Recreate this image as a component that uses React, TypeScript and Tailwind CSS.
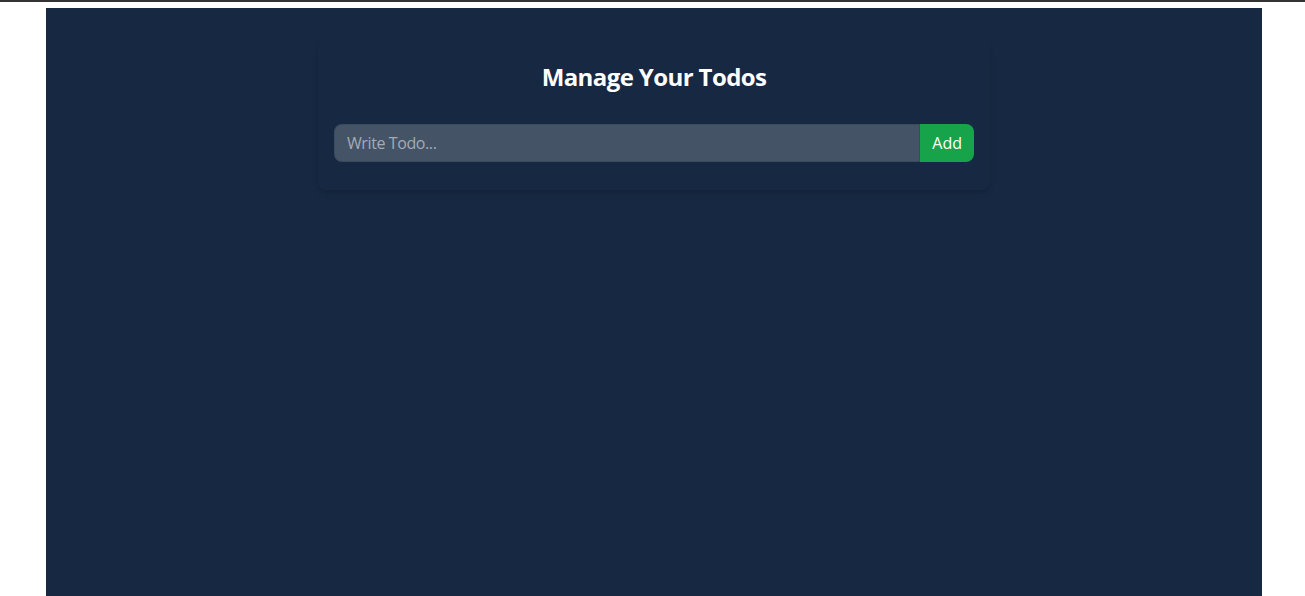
import React from "react";

export default function App() {
  return (
    <div className="min-h-screen bg-white" style={{ fontFamily: '"Open Sans", "Noto Sans", sans-serif' }}>
      <div className="h-[2px] bg-[#333333]" />
      <div className="pt-[6px] pl-[46px]">
        <div className="w-[1216px] min-h-[588px] bg-[#172842] py-8">
          <div className="w-full max-w-2xl mx-auto shadow-md rounded-lg px-4 py-3 text-white">
            <h1 className="text-2xl font-bold text-center mb-8 mt-2 pt-px leading-[31px] tracking-tight">Manage Your Todos</h1>
            <div className="mb-4">
              <form className="flex" onSubmit={(e) => e.preventDefault()}>
                <input
                  type="text"
                  placeholder="Write Todo..."
                  className="w-full border border-black/10 rounded-l-lg px-3 outline-none bg-white/20 py-1.5 text-base leading-6 tracking-tight placeholder:text-[#a3abb6]"
                />
                <button type="submit" className="rounded-r-lg px-3 py-1 bg-[#16a34a] text-white shrink-0 text-base">
                  Add
                </button>
              </form>
            </div>
            <div className="flex flex-wrap gap-y-3"></div>
          </div>
        </div>
      </div>
    </div>
  );
}
